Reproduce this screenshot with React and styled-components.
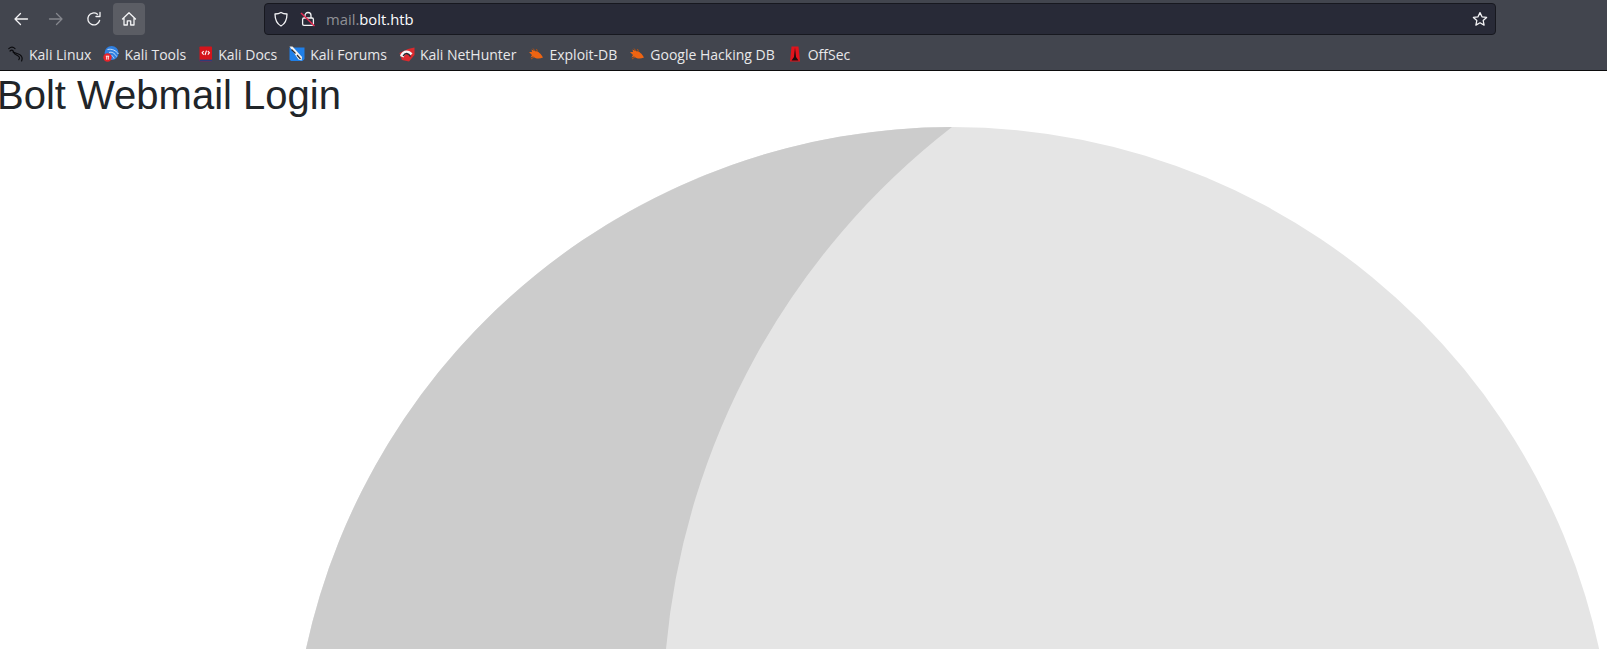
import React from "react";
import styled, { createGlobalStyle } from "styled-components";

const GlobalStyle = createGlobalStyle`
  html, body {
    margin: 0;
    padding: 0;
    height: 100%;
    overflow: hidden;
    background: #fff;
  }
`;

/* browser chrome */
const Chrome = styled.header`
  height: 71px;
  box-sizing: border-box;
  background: #42454e;
  border-bottom: 1px solid #0c0c0d;
  font-family: "Open Sans", "Noto Sans", sans-serif;
`;

const NavRow = styled.div`
  height: 38px;
  display: flex;
  align-items: center;
  padding: 0 111px 0 4px;
`;

const NavButton = styled.div`
  width: ${(p) => p.$w || 35}px;
  height: 32px;
  display: flex;
  align-items: center;
  justify-content: center;
  flex: none;
  border-radius: 4px;
  background: ${(p) => (p.$active ? "#5b5d64" : "transparent")};
  color: ${(p) => (p.$disabled ? "#85878d" : "#f3f3f5")};
`;

const UrlBar = styled.div`
  margin-left: 119px;
  flex: 1;
  height: 32px;
  box-sizing: border-box;
  display: flex;
  align-items: center;
  padding: 0 7px 0 8px;
  background: #282a37;
  border: 1px solid #17181f;
  border-radius: 4px;
  color: #f3f3f5;
`;

const LockSlot = styled.span`
  margin-left: 11px;
  display: flex;
`;

const UrlText = styled.span`
  margin-left: 10px;
  flex: 1;
  font-size: 14.8px;
  color: #fbfbfe;
`;

const Host = styled.span`
  color: #8f9096;
`;

const BookmarkRow = styled.div`
  height: 32px;
  display: flex;
  align-items: center;
  padding: 0 0 2px 8px;
  gap: 12px;
`;

const Bookmark = styled.div`
  display: flex;
  align-items: center;
  gap: 5px;
  font-size: 14px;
  color: #e8e8ea;
  white-space: nowrap;
`;

/* page */
const Page = styled.main`
  background: #fff;
`;

const Title = styled.h1`
  margin: 0 0 0 -3px;
  font-family: "Liberation Sans", Arial, sans-serif;
  font-size: 40px;
  font-weight: 400;
  line-height: 48px;
  color: #212529;
`;

const Artwork = styled.svg`
  display: block;
  width: 1607px;
  height: 530px;
`;

const Line = ({ size = 16, children }) => (
  <svg width={size} height={size} viewBox="0 0 16 16" fill="none" stroke="currentColor" strokeWidth="1.3" strokeLinecap="round" strokeLinejoin="round">
    {children}
  </svg>
);

const Fav = ({ children, w = 16 }) => (
  <svg width={w} height="16" viewBox={`0 0 ${w} 16`}>
    {children}
  </svg>
);

const Bug = () => (
  <Fav>
    <path d="M1 6 L4 6 L3.5 3.5 L6.5 5 C9.5 4.5 13 7.5 15 11.5 C11 13.5 7 12.5 5 10.5 L2.5 11.5 L4 9 Z" fill="#ee6412" />
    <path d="M5 2.5 L7.5 5.5 M8.5 3 L9.5 5.5 M3 13 L6 11" stroke="#b8500f" strokeWidth="1" fill="none" />
  </Fav>
);

const bookmarks = [
  {
    label: "Kali Linux",
    icon: (
      <Fav>
        <g fill="none" stroke="#0b0b0e" strokeWidth="1.2" strokeLinecap="round">
          <path d="M0.8 2.6 C3 0.8 5.5 1.2 7 2.6 M2 5 C4 3.4 5.6 4.6 5.2 6 C7 7.6 12 7 13.6 10.4 C14.4 12 14.2 13.6 13.6 15" />
          <path d="M5.4 6 C7 9.4 10 9 11.2 11 C11.8 12 11.4 13 10.8 13.6" />
        </g>
      </Fav>
    ),
  },
  {
    label: "Kali Tools",
    icon: (
      <Fav>
        <circle cx="8.6" cy="7" r="7" fill="#2f7fe0" />
        <path d="M4.5 3.5 C9 2.5 13 4.5 15.4 8 M6 6.5 C9 5.5 12 7.5 13.5 10.5 M8.5 9.5 C9.8 10 10.5 11 11 12.5" stroke="#d7e8fc" strokeWidth="0.9" fill="none" />
        <circle cx="4.5" cy="11.5" r="4.2" fill="#e8232a" />
        <path d="M2.8 10.2 H6.2 M3.7 10.2 V13.6 M5.3 10.2 V13.6" stroke="#fff" strokeWidth="0.9" />
      </Fav>
    ),
  },
  {
    label: "Kali Docs",
    icon: (
      <Fav w={15}>
        <rect x="1.5" y="0.5" width="12.5" height="15" rx="0.8" fill="#d5141b" />
        <rect x="1.5" y="13.6" width="12.5" height="1.9" fill="#2c3c78" />
        <path d="M5.7 5 L4.1 6.8 L5.7 8.6 M9.8 5 L11.4 6.8 L9.8 8.6 M8.5 4.6 L7 9" stroke="#fff" strokeWidth="1.1" fill="none" />
      </Fav>
    ),
  },
  {
    label: "Kali Forums",
    icon: (
      <Fav>
        <path d="M0.5 1.5 H15.5 V13 L13.5 15 H2 L0.5 13.5 Z" fill="#1f7fe8" />
        <path d="M0.5 0.5 L3.5 0.5 L13 11 L12.5 14.5 L9.5 13.5 Z" fill="#f4f4f4" />
        <path d="M2.5 3.5 L6.5 7.5 M8 9 L11.5 13" stroke="#2b2b30" strokeWidth="1.2" />
      </Fav>
    ),
  },
  {
    label: "Kali NetHunter",
    icon: (
      <Fav>
        <path d="M0.5 7 L9 3 L15.5 1.5 L15.5 9 L10 15.5 L3 14 Z" fill="#dc2a2e" />
        <path d="M1 10 C2.5 4 9.5 2.5 13.5 7.5 L10.8 10 C8.5 7 6 7.5 4.5 11.5 Z" fill="#f5f5f5" />
        <path d="M4.2 10 C6 6.5 9.5 6.5 11.5 10.5" stroke="#25252a" strokeWidth="1.5" fill="none" />
      </Fav>
    ),
  },
  { label: "Exploit-DB", icon: <Bug /> },
  { label: "Google Hacking DB", icon: <Bug /> },
  {
    label: "OffSec",
    icon: (
      <Fav>
        <path d="M4.5 0.5 H11.5 L13 15.5 H3 Z" fill="#e0141c" />
        <path d="M8 1.5 L9 11 L11.5 14.5 H4.5 L7 11 Z" fill="#1a0d0f" />
      </Fav>
    ),
  },
];

export default function App() {
  return (
    <>
      <GlobalStyle />
      <Chrome>
        <NavRow>
          <NavButton $w={34}>
            <Line>
              <path d="M14.5 8 H2 M7.5 2.5 L2 8 L7.5 13.5" />
            </Line>
          </NavButton>
          <NavButton $disabled $w={36}>
            <Line>
              <path d="M1.5 8 H14 M8.5 2.5 L14 8 L8.5 13.5" />
            </Line>
          </NavButton>
          <NavButton $w={39}>
            <Line>
              <path d="M13.6 9.5 A6 6 0 1 1 11.5 3.2" />
              <path d="M14 1.5 V5.5 H10" />
            </Line>
          </NavButton>
          <NavButton $w={32} $active>
            <Line>
              <path d="M1.5 8 L8 1.8 L14.5 8 M3 6.8 V14 H6.3 V9.8 H9.7 V14 H13 V6.8" />
            </Line>
          </NavButton>
          <UrlBar>
            <Line>
              <path d="M8 1.5 C10 2.8 12 3 14 3 C14 9 12.5 12.5 8 15 C3.5 12.5 2 9 2 3 C4 3 6 2.8 8 1.5 Z" />
            </Line>
            <LockSlot>
              <svg width="16" height="16" viewBox="0 0 16 16" fill="none">
                <path d="M5 7 V4.5 A3 3 0 0 1 11 4.5 V7" stroke="#f3f3f5" strokeWidth="1.3" />
                <rect x="2.6" y="7" width="10.8" height="7.4" rx="1.4" stroke="#f3f3f5" strokeWidth="1.3" />
                <path d="M1 2 L14.5 15" stroke="#e22850" strokeWidth="1.5" />
              </svg>
            </LockSlot>
            <UrlText>
              <Host>mail.</Host>bolt.htb
            </UrlText>
            <Line>
              <path d="M8 1.6 L10 5.8 L14.6 6.4 L11.2 9.5 L12.1 14.1 L8 11.8 L3.9 14.1 L4.8 9.5 L1.4 6.4 L6 5.8 Z" />
            </Line>
          </UrlBar>
        </NavRow>
        <BookmarkRow>
          {bookmarks.map((b) => (
            <Bookmark key={b.label}>
              {b.icon}
              {b.label}
            </Bookmark>
          ))}
        </BookmarkRow>
      </Chrome>
      <Page>
        <Title>Bolt Webmail Login</Title>
        <Artwork viewBox="0 119 1607 530">
          <circle cx="952.5" cy="788.5" r="661.5" fill="#e5e5e5" />
          <path d="M952 127 A661.5 661.5 0 0 0 306 649 L666 649 A745 745 0 0 1 952 127 Z" fill="#cccccc" />
        </Artwork>
      </Page>
    </>
  );
}
